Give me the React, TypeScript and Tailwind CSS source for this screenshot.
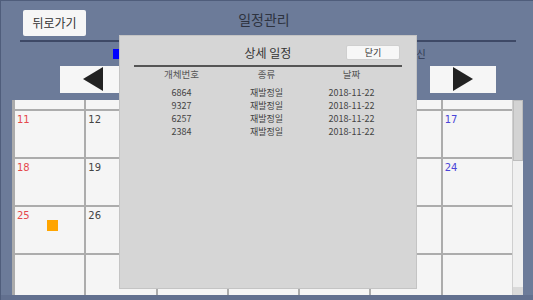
import React from 'react'

const KR = "font-['Noto_Sans_CJK_KR','Noto_Sans',sans-serif]"

type Cell = { day?: string; color?: string; mark?: boolean }

const rows: Cell[][] = [
  [
    { day: '11', color: 'text-[#e5484d]' },
    { day: '12', color: 'text-[#444]' },
    { day: '13', color: 'text-[#444]' },
    { day: '14', color: 'text-[#444]' },
    { day: '15', color: 'text-[#444]' },
    { day: '16', color: 'text-[#444]' },
    { day: '17', color: 'text-[#4a44d8]' },
  ],
  [
    { day: '18', color: 'text-[#e5484d]' },
    { day: '19', color: 'text-[#444]' },
    { day: '20', color: 'text-[#444]' },
    { day: '21', color: 'text-[#444]' },
    { day: '22', color: 'text-[#444]' },
    { day: '23', color: 'text-[#444]' },
    { day: '24', color: 'text-[#4a44d8]' },
  ],
  [
    { day: '25', color: 'text-[#e5484d]', mark: true },
    { day: '26', color: 'text-[#444]' },
    { day: '27', color: 'text-[#444]' },
    { day: '28', color: 'text-[#444]' },
    { day: '29', color: 'text-[#444]' },
    { day: '30', color: 'text-[#444]' },
    {},
  ],
  [{}, {}, {}, {}, {}, {}, {}],
]

const schedules = [
  { id: '6864', kind: '재발정일', date: '2018-11-22' },
  { id: '9327', kind: '재발정일', date: '2018-11-22' },
  { id: '6257', kind: '재발정일', date: '2018-11-22' },
  { id: '2384', kind: '재발정일', date: '2018-11-22' },
]

function Triangle({ dir }: { dir: 'left' | 'right' }) {
  return (
    <svg width="20" height="24" viewBox="0 0 20 24">
      {dir === 'left' ? <polygon points="20,0 20,24 0,12" fill="#222" /> : <polygon points="0,0 0,24 20,12" fill="#222" />}
    </svg>
  )
}

function DetailModal() {
  return (
    <div className={`absolute left-[118px] top-[34px] w-[298px] h-[254px] bg-[#d6d6d6] border border-[#c4c4c4] ${KR}`}>
      {/* Title */}
      <div className="relative h-[29px] flex items-center justify-center">
        <span className="text-[12px] text-[#333] pt-[4px]">상세 일정</span>
        <button className="absolute left-[226px] top-[9px] w-[54px] h-[15px] bg-[#f7f7f7] border border-[#cfcfcf] rounded-[2px] text-[9px] leading-none text-[#333]">
          닫기
        </button>
      </div>
      <div className="mx-[14px] h-[2px] bg-[#555]" />

      {/* Table */}
      <div className="ml-[19px] w-[255px] grid grid-cols-3 text-center">
        <div className="text-[9.5px] text-[#555] h-[19px] flex items-center justify-center pb-[4px]">개체번호</div>
        <div className="text-[9.5px] text-[#555] h-[19px] flex items-center justify-center pb-[4px]">종류</div>
        <div className="text-[9.5px] text-[#555] h-[19px] flex items-center justify-center pb-[4px]">날짜</div>
        {schedules.map(s => (
          <React.Fragment key={s.id}>
            <div className="text-[9px] text-[#444] h-[13px] leading-[13px]">{s.id}</div>
            <div className="text-[9px] text-[#444] h-[13px] leading-[13px]">{s.kind}</div>
            <div className="text-[9px] text-[#444] h-[13px] leading-[13px]">{s.date}</div>
          </React.Fragment>
        ))}
      </div>
    </div>
  )
}

export default function App() {
  return (
    <div className={`relative w-[533px] h-[300px] overflow-hidden bg-[#6c7b99] border-t border-l border-[#4f5d7b] flex flex-col ${KR}`}>
      {/* Header */}
      <header className="h-[39px] grid grid-cols-[1fr_auto_1fr] items-start">
        <button className="ml-[22px] mt-[9px] w-[63px] h-[26px] bg-[#f6f6f6] rounded-[2px] text-[12px] text-[#333] justify-self-start">
          뒤로가기
        </button>
        <h1 className="mt-[8px] text-[14px] text-[#2e3340] -ml-[6px]">일정관리</h1>
        <div />
      </header>
      <div className="ml-[19px] w-[496px] h-[2px] bg-[#3e4966]" />

      {/* Legend */}
      <div className="h-[23px] flex items-center">
        <div className="ml-[112px] w-[6px] h-[10px] bg-[#0000ff]" />
        <span className="ml-[279px] text-[10px] text-[#2f3852]">미갱신</span>
      </div>

      {/* Month navigation */}
      <div className="h-[28px] flex items-center">
        <button className="ml-[59px] w-[66px] h-[27px] bg-[#f6f6f6] flex items-center justify-center">
          <Triangle dir="left" />
        </button>
        <button className="ml-[304px] w-[66px] h-[27px] bg-[#f6f6f6] flex items-center justify-center">
          <Triangle dir="right" />
        </button>
      </div>

      {/* Calendar */}
      <div className="mt-[7px] ml-[11px] flex h-[195px]">
        <div className="w-[3px] bg-[#ababab]" />
        <div className="w-[497px] grid grid-cols-7 grid-rows-[9px_46px_46px_46px_40px] gap-[2px] bg-[#acacac] font-['DejaVu_Sans',sans-serif]">
          {Array.from({ length: 7 }).map((_, i) => (
            <div key={'h' + i} className="bg-[#f5f5f5]" />
          ))}
          {rows.flat().map((c, i) => (
            <div key={i} className="bg-[#f5f5f5] relative">
              {c.day && <span className={`absolute left-[2px] top-[1px] text-[10px] ${c.color}`}>{c.day}</span>}
              {c.mark && <div className="absolute left-[32px] top-[13px] w-[11px] h-[11px] bg-[#ffa500]" />}
            </div>
          ))}
        </div>
        {/* Scrollbar */}
        <div className="w-[11px] bg-[#f0f0f0] flex flex-col border-l border-[#cfcfcf]">
          <div className="h-[61px] bg-[#d3d3d3] border border-[#bdbdbd]" />
          <div className="flex-1" />
          <div className="h-[8px] bg-[#dadada]" />
        </div>
      </div>
      <div className="flex-1 bg-[#62708f]" />

      <DetailModal />
    </div>
  )
}
